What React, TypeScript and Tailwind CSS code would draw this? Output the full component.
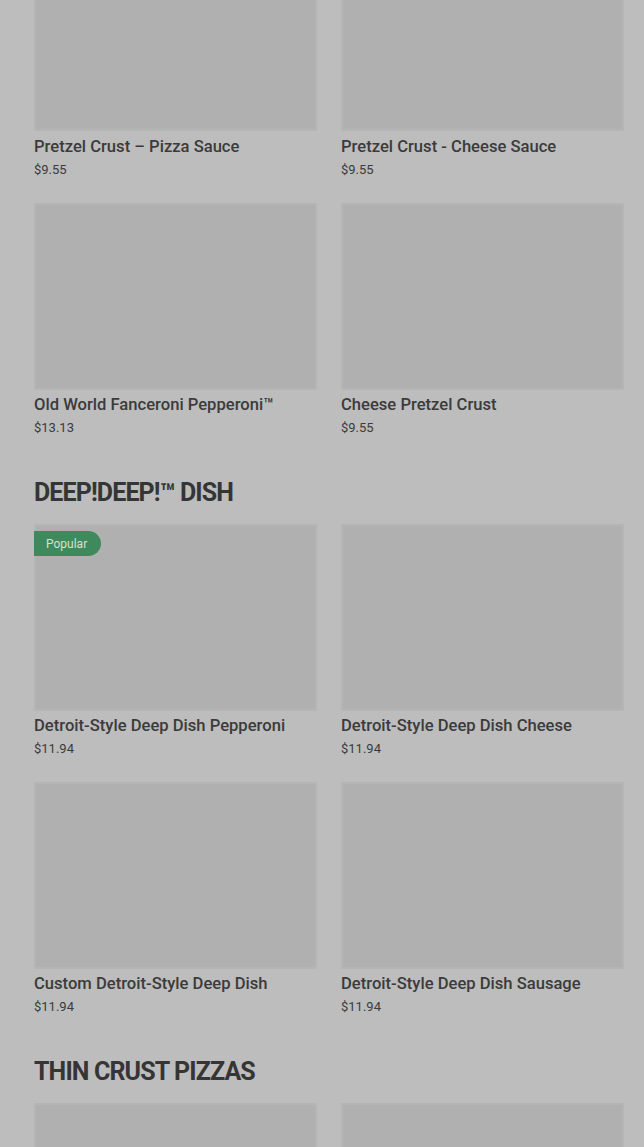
import React from 'react'

interface Item {
  name: string
  price: string
  badge?: string
}

const Card = ({ item, short }: { item: Item; short?: boolean }) => (
  <div className="flex flex-col">
    <div
      className={`relative border-2 border-[#b5b5b5] bg-[#b0b0b0] ${short ? 'h-[131px] border-t-0' : 'h-[187px]'}`}
    >
      {item.badge && (
        <span className="absolute left-[-2px] top-[5px] flex h-[25px] items-center rounded-r-full bg-[#3f8a5d] pl-[12px] pr-[14px] text-[12px] text-[#cfe3d6]">
          {item.badge}
        </span>
      )}
    </div>
    <div className={`${short ? 'mt-[6px]' : 'mt-[5px]'} text-[16.6px] font-medium leading-[20px] text-[#3b3b3b]`}>
      {item.name}
    </div>
    <div className="mt-[3px] text-[13px] leading-[20px] text-[#3b3b3b]">{item.price}</div>
  </div>
)

const Heading = ({ children }: { children: React.ReactNode }) => (
  <h2 className="mb-[16px] mt-[40px] text-[25px] font-bold uppercase leading-[30px] tracking-[-0.035em] text-[#353535]">
    {children}
  </h2>
)

const Grid = ({ items, firstShort }: { items: Item[]; firstShort?: boolean }) => (
  <div className="grid grid-cols-2 gap-x-[24px] gap-y-[23px]">
    {items.map((it, i) => (
      <Card key={it.name} item={it} short={firstShort && i < 2} />
    ))}
  </div>
)

export default function App() {
  return (
    <div
      className="h-[1147px] overflow-hidden bg-[#bdbdbd] pl-[34px] pr-[20px]"
      style={{ fontFamily: 'Roboto, "Noto Sans", sans-serif' }}
    >
      <Grid
        firstShort
        items={[
          { name: 'Pretzel Crust – Pizza Sauce', price: '$9.55' },
          { name: 'Pretzel Crust - Cheese Sauce', price: '$9.55' },
          { name: 'Old World Fanceroni Pepperoni™', price: '$13.13' },
          { name: 'Cheese Pretzel Crust', price: '$9.55' },
        ]}
      />
      <Heading>DEEP!DEEP!™ DISH</Heading>
      <Grid
        items={[
          { name: 'Detroit-Style Deep Dish Pepperoni', price: '$11.94', badge: 'Popular' },
          { name: 'Detroit-Style Deep Dish Cheese', price: '$11.94' },
          { name: 'Custom Detroit-Style Deep Dish', price: '$11.94' },
          { name: 'Detroit-Style Deep Dish Sausage', price: '$11.94' },
        ]}
      />
      <Heading>THIN CRUST PIZZAS</Heading>
      <Grid
        items={[
          { name: 'Thin Crust Pepperoni', price: '$11.94' },
          { name: 'Thin Crust Cheese', price: '$11.94' },
        ]}
      />
    </div>
  )
}
